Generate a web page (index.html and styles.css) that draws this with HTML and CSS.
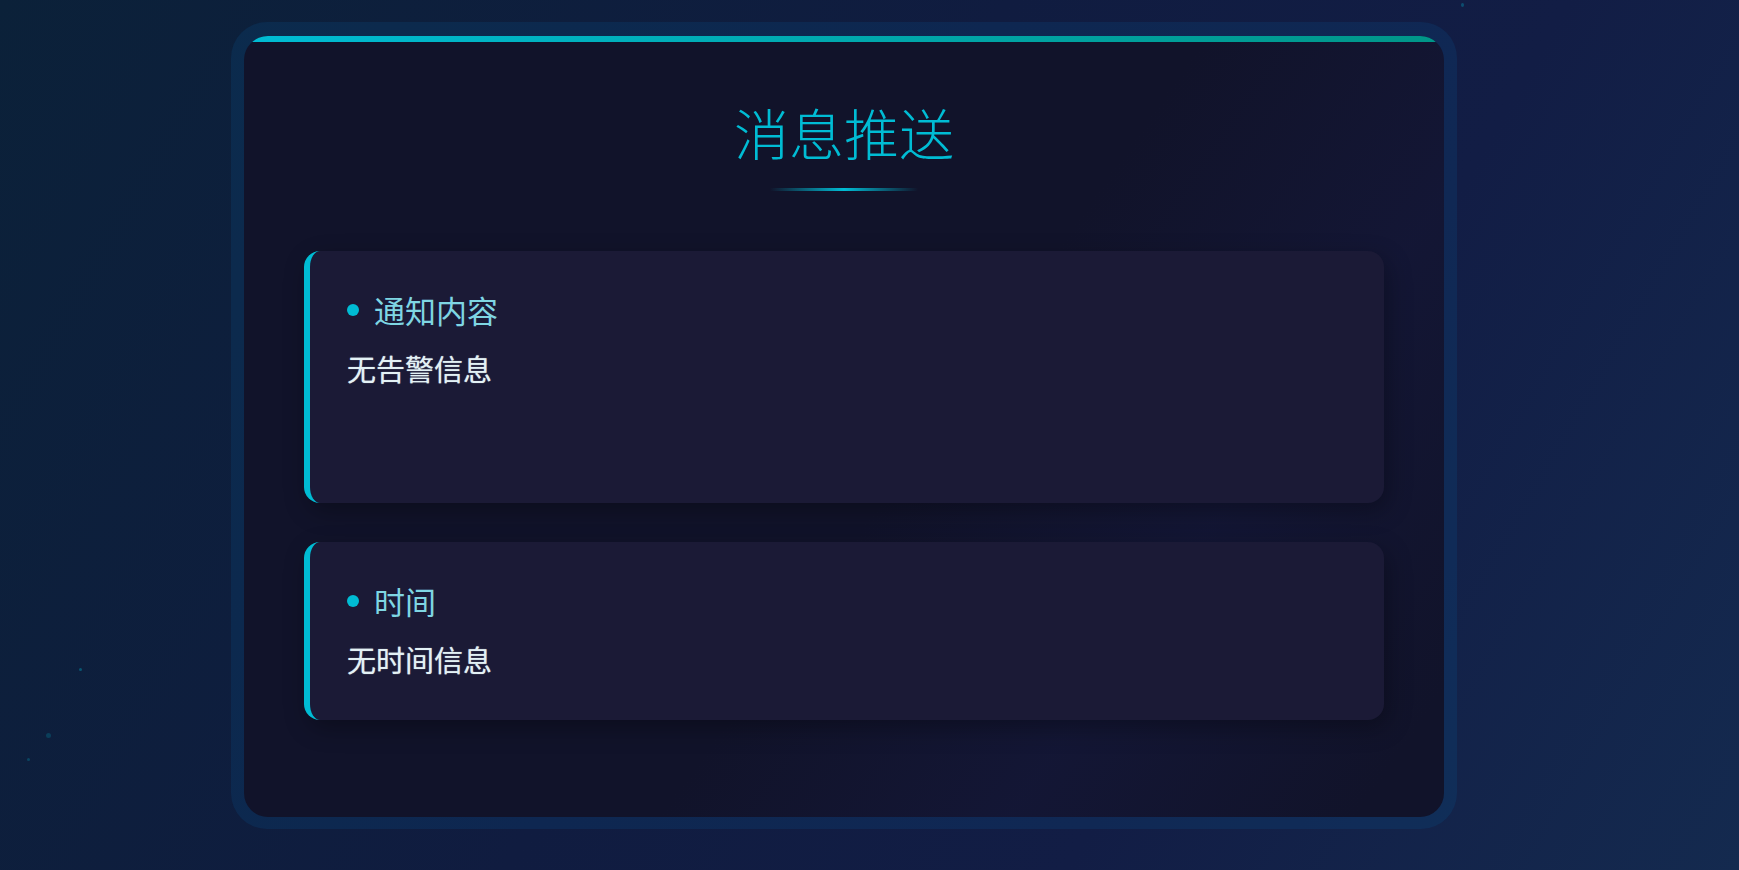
FILE: index.html
```html
<!DOCTYPE html>
<html lang="zh-CN">
<head>
    <meta charset="UTF-8">
    <meta name="viewport" content="width=device-width, initial-scale=1.0">
    <title>消息推送</title>
    <link rel="stylesheet" href="styles.css">
</head>
<body>
    <span class="particle p1"></span>
    <span class="particle p2"></span>
    <span class="particle p3"></span>
    <span class="particle p4"></span>

    <div class="frame">
        <div class="container">
            <div class="header">
                <h1>消息推送</h1>
                <div class="title-line"></div>
            </div>

            <div class="msg-card msg-card-tall">
                <div class="msg-label"><span class="dot"></span>通知内容</div>
                <div class="msg-text">无告警信息</div>
            </div>

            <div class="msg-card">
                <div class="msg-label"><span class="dot"></span>时间</div>
                <div class="msg-text">无时间信息</div>
            </div>
        </div>
    </div>
</body>
</html>
```

FILE: styles.css
```css
body {
    font-family: "Noto Sans CJK SC", "Noto Sans", sans-serif;
    margin: 0;
    padding: 22px 0 0 231px;
    height: 870px;
    box-sizing: border-box;
    overflow: hidden;
    background: linear-gradient(120deg, #0b2139 0%, #101c40 45%, #121d45 70%, #142a4f 100%);
    position: relative;
}
.particle {
    position: absolute;
    border-radius: 50%;
    background: rgba(0, 188, 212, 0.35);
}
.p1 { left: 79px; top: 668px; width: 3px; height: 3px; }
.p2 { left: 46px; top: 733px; width: 5px; height: 5px; background: rgba(0, 188, 212, 0.2); }
.p3 { left: 27px; top: 758px; width: 3px; height: 3px; background: rgba(0, 188, 212, 0.25); }
.p4 { left: 1461px; top: 3px; width: 3px; height: 4px; background: rgba(0, 188, 212, 0.3); }
.frame {
    width: 1200px;
    padding: 14px 13px 12px 13px;
    border-radius: 36px;
    background: rgba(10, 80, 140, 0.22);
}
.container {
    position: relative;
    height: 781px;
    box-sizing: border-box;
    padding: 6px 60px 0 60px;
    border-radius: 24px;
    overflow: hidden;
    background:
        linear-gradient(125deg, rgba(20, 22, 58, 0) 55%, rgba(22, 26, 66, 0.45) 75%, rgba(20, 22, 58, 0) 95%),
        #11132a;
}
.container::before {
    content: "";
    position: absolute;
    left: 0;
    right: 0;
    top: 0;
    height: 6px;
    background: linear-gradient(90deg, #00bcd4, #009688);
}
.header {
    text-align: center;
    padding-top: 60px;
    margin-bottom: 60px;
}
h1 {
    margin: 0;
    font-size: 55px;
    font-weight: 300;
    line-height: 58px;
    color: #00bcd4;
}
.title-line {
    width: 148px;
    height: 3px;
    margin: 28px auto 0;
    background: linear-gradient(90deg, transparent, #00bcd4, transparent);
}
.msg-card {
    position: relative;
    padding: 40px 36px 40px 37px;
    margin-bottom: 39px;
    border-radius: 16px;
    border-left: 6px solid #00bcd4;
    background: #1b1a36;
    box-shadow: 4px 8px 24px rgba(0, 0, 0, 0.3);
}
.msg-card-tall {
    min-height: 172px;
}
.msg-label {
    display: flex;
    align-items: center;
    font-size: 31px;
    line-height: 38px;
    color: #7fd6e3;
    margin-bottom: 18px;
}
.dot {
    width: 12px;
    height: 12px;
    border-radius: 50%;
    background: #00bcd4;
    margin-right: 15px;
}
.msg-text {
    font-size: 29px;
    font-weight: 400;
    line-height: 42px;
    color: #e3f1f5;
    text-shadow: 0 0 1px rgba(227, 241, 245, 0.7);
}
```
